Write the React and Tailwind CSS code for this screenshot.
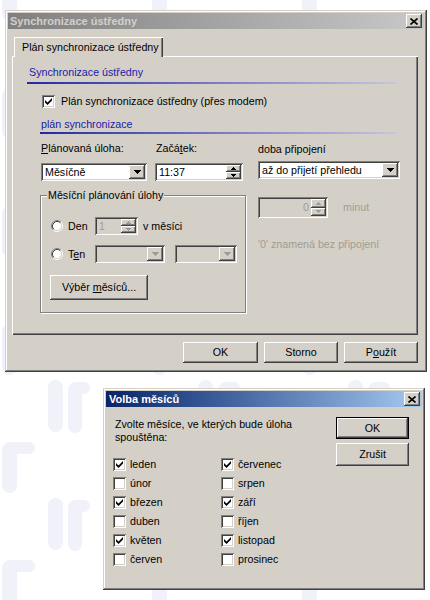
import React from 'react';

const RAISED = 'shadow-[inset_-1px_-1px_0_#404040,inset_1px_1px_0_#ffffff,inset_-2px_-2px_0_#808080,inset_2px_2px_0_#d4d0c8]';
const SUNKEN = 'shadow-[inset_1px_1px_0_#808080,inset_-1px_-1px_0_#ffffff,inset_2px_2px_0_#404040,inset_-2px_-2px_0_#d4d0c8]';
const FRAME = 'shadow-[inset_-1px_-1px_0_#404040,inset_1px_1px_0_#d4d0c8,inset_-2px_-2px_0_#808080,inset_2px_2px_0_#ffffff]';

const Tri = ({ up, w = 7, h = 4, color = '#000' }) => (
  <svg width={w} height={h} viewBox={`0 0 ${w} ${h}`} shapeRendering="crispEdges">
    <path d={up ? `M0 ${h}H${w}L${w / 2} 0Z` : `M0 0H${w}L${w / 2} ${h}Z`} fill={color} />
  </svg>
);

const CloseBtn = () => (
  <div className={`w-[16px] h-[14px] bg-[#d4d0c8] ${RAISED} flex items-center justify-center`}>
    <svg width="8" height="7" viewBox="0 0 8 7">
      <path d="M0.5 0.5L7.5 6.5M7.5 0.5L0.5 6.5" stroke="#000" strokeWidth="1.6" />
    </svg>
  </div>
);

const Check = ({ checked }) => (
  <div className={`w-[13px] h-[13px] bg-white ${SUNKEN} flex items-center justify-center shrink-0`}>
    {checked && (
      <svg width="7" height="7" viewBox="0 0 7 7">
        <path d="M0 2L2.5 4.5L7 0V2.5L2.5 7L0 4.5Z" fill="#000" />
      </svg>
    )}
  </div>
);

const Radio = () => (
  <svg width="12" height="12" viewBox="0 0 12 12" className="shrink-0">
    <circle cx="6" cy="6" r="4.5" fill="#fff" />
    <path d="M2.11 9.89A5.5 5.5 0 0 1 9.89 2.11" stroke="#808080" fill="none" />
    <path d="M2.82 9.18A4.5 4.5 0 0 1 9.18 2.82" stroke="#404040" fill="none" />
    <path d="M9.89 2.11A5.5 5.5 0 0 1 2.11 9.89" stroke="#ffffff" fill="none" />
    <path d="M9.18 2.82A4.5 4.5 0 0 1 2.82 9.18" stroke="#d4d0c8" fill="none" />
  </svg>
);

const Combo = ({ className, value, disabled }) => (
  <div className={`${className} ${SUNKEN} ${disabled ? 'bg-[#d4d0c8]' : 'bg-white'} flex items-stretch p-[2px]`}>
    <span className="flex-1 pl-[2px] flex items-center whitespace-nowrap overflow-hidden">{value}</span>
    <div className={`w-[16px] bg-[#d4d0c8] ${RAISED} flex items-center justify-center`}>
      <Tri color={disabled ? '#a09c94' : '#000'} />
    </div>
  </div>
);

const Spin = ({ className, value, disabled, right }) => (
  <div className={`${className} ${SUNKEN} ${disabled ? 'bg-[#d4d0c8]' : 'bg-white'} flex items-stretch p-[2px]`}>
    <span
      className={`flex-1 flex items-center px-[2px] ${right ? 'justify-end' : ''} ${disabled ? 'text-[#a09c94]' : ''}`}
    >
      {value}
    </span>
    <div className="w-[15px] flex flex-col">
      <div className={`flex-1 bg-[#d4d0c8] ${RAISED} flex items-center justify-center`}>
        <Tri up w={5} h={3} color={disabled ? '#a09c94' : '#000'} />
      </div>
      <div className={`flex-1 bg-[#d4d0c8] ${RAISED} flex items-center justify-center`}>
        <Tri w={5} h={3} color={disabled ? '#a09c94' : '#000'} />
      </div>
    </div>
  </div>
);

const Button = ({ className, children }) => (
  <div className={`${className} bg-[#d4d0c8] ${RAISED} flex items-center justify-center`}>{children}</div>
);

const months = [
  ['leden', true, 'červenec', true],
  ['únor', false, 'srpen', false],
  ['březen', true, 'září', true],
  ['duben', false, 'říjen', false],
  ['květen', true, 'listopad', true],
  ['červen', false, 'prosinec', false],
];

// faint "ir" watermark behind the windows
const Watermark = () => (
  <svg className="absolute inset-0" width="430" height="600">
    <defs>
      <pattern id="wm" width="150" height="118" patternUnits="userSpaceOnUse">
        <g fill="#f0f1f9">
          <rect x="48" y="26" width="15" height="52" rx="7.5" />
          <path d="M68 36a8 8 0 0 1 8-8h8a6 6 0 0 1 0 12h-2v32a7 7 0 0 1-14 0Z" />
          <path d="M2 96a8 8 0 0 1 8-8h19a6 6 0 0 1 0 12h-12v31.5a7.5 7.5 0 0 1-15 0Z" />
          <path d="M2 -22a8 8 0 0 1 8-8h19a6 6 0 0 1 0 12h-12v31.5a7.5 7.5 0 0 1-15 0Z" />
        </g>
      </pattern>
    </defs>
    <rect width="430" height="600" fill="url(#wm)" />
  </svg>
);

export default function App() {
  return (
    <div className="relative w-[430px] h-[600px] bg-white overflow-hidden font-['Liberation_Sans',Arial,sans-serif] text-[10.7px] leading-[13px] text-black">
      <Watermark />

      <div className="relative pt-[10px] pl-[5px]">
        {/* Main window */}
        <div className={`w-[422px] h-[362px] bg-[#d4d0c8] ${FRAME} p-[3px] flex flex-col`}>
          <div className="h-[16px] shrink-0 bg-linear-to-r from-[#808080] to-[#c8c8c8] flex items-center justify-between pl-[2px] pr-[2px]">
            <span className="font-bold text-[11px] text-[#d4d0c8]">Synchronizace ústředny</span>
            <CloseBtn />
          </div>

          <div className="mt-[8px] ml-[6px] flex">
            <div className="relative z-10 -mb-[1px] h-[20px] w-[149px] bg-[#d4d0c8] shadow-[inset_1px_1px_0_#ffffff,inset_-1px_0_0_#404040,inset_-2px_0_0_#808080] flex items-center pl-[8px]">
              Plán synchronizace ústředny
            </div>
          </div>

          <div className="ml-[4px] w-[406px] h-[279px] shrink-0 bg-[#d4d0c8] shadow-[inset_1px_1px_0_#ffffff,inset_-1px_-1px_0_#404040,inset_-2px_-2px_0_#808080] pt-[10px]">
            <div className="ml-[17px] text-[#2020a8]">Synchronizace ústředny</div>
            <div className="mt-[3px] ml-[15px] w-[370px] h-[2px] bg-linear-to-r from-[#2626a0] via-[#7a78c4] to-[#c8c6dc]" />

            <div className="mt-[11px] ml-[30px] flex items-center h-[13px]">
              <Check checked />
              <span className="ml-[6px]">Plán synchronizace ústředny (přes modem)</span>
            </div>

            <div className="mt-[10px] ml-[29px] text-[#2020a8]">plán synchronizace</div>
            <div className="mt-[1px] ml-[28px] w-[357px] h-[2px] bg-linear-to-r from-[#2626a0] via-[#7a78c4] to-[#c8c6dc]" />

            <div className="mt-[8px] ml-[28px] flex">
              {/* left column */}
              <div className="w-[206px]">
                <div className="flex h-[13px]">
                  <span className="w-[116px] pl-[1px]">
                    <u>P</u>lánovaná úloha:
                  </span>
                  <span>
                    Začá<u>t</u>ek:
                  </span>
                </div>
                <div className="mt-[8px] flex">
                  <Combo className="ml-[1px] w-[106px] h-[18px]" value="Měsíčně" />
                  <Spin className="ml-[8px] w-[88px] h-[18px]" value="11:37" />
                </div>

                <div className="relative mt-[14px] w-[206px] h-[118px] border border-[#808080] shadow-[inset_1px_1px_0_#ffffff,1px_1px_0_#ffffff]">
                  <span className="absolute left-[6px] -top-[7px] px-[1px] bg-[#d4d0c8]">Měsíční plánování úlohy</span>

                  <div className="mt-[21px] flex items-center h-[18px]">
                    <div className="w-[54px] flex items-center pl-[10px]">
                      <Radio />
                      <span className="ml-[5px]">Den</span>
                    </div>
                    <Spin className="w-[43px] h-[18px]" value="1" disabled />
                    <span className="ml-[5px]">v měsíci</span>
                  </div>

                  <div className="mt-[10px] flex items-center h-[18px]">
                    <div className="w-[54px] flex items-center pl-[10px]">
                      <Radio />
                      <span className="ml-[5px]">
                        T<u>e</u>n
                      </span>
                    </div>
                    <Combo className="w-[70px] h-[18px]" value="" disabled />
                    <Combo className="ml-[10px] w-[62px] h-[18px]" value="" disabled />
                  </div>

                  <Button className="mt-[12px] ml-[9px] w-[98px] h-[25px]">
                    <span>
                      Výběr <u>m</u>ěsíců...
                    </span>
                  </Button>
                </div>
              </div>

              {/* right column */}
              <div className="ml-[12px] w-[143px]">
                <div className="mt-[1px]">doba připojení</div>
                <Combo className="mt-[5px] w-[142px] h-[18px]" value="až do přijetí přehledu" />
                <div className="mt-[18px] flex items-center">
                  <Spin className="w-[70px] h-[21px]" value="0" disabled right />
                  <span className="ml-[15px] text-[#a09c94]">minut</span>
                </div>
                <div className="mt-[20px] text-[#a09c94] whitespace-nowrap">'0' znamená bez připojení</div>
              </div>
            </div>
          </div>

          <div className="mt-[7px] ml-[4px] w-[406px] flex justify-end gap-[6px]">
            <Button className="w-[75px] h-[21px]">OK</Button>
            <Button className="w-[74px] h-[21px]">Storno</Button>
            <Button className="w-[74px] h-[21px]">
              <span>
                P<u>o</u>užít
              </span>
            </Button>
          </div>
        </div>

        {/* Volba měsíců dialog */}
        <div className={`ml-[98px] mt-[16px] w-[322px] h-[202px] bg-[#d4d0c8] ${FRAME} p-[3px] flex flex-col`}>
          <div className="h-[16px] shrink-0 bg-linear-to-r from-[#0a246a] to-[#a6caf0] flex items-center justify-between pl-[3px] pr-[2px]">
            <span className="font-bold text-[11px] text-white">Volba měsíců</span>
            <CloseBtn />
          </div>

          <div className="flex">
            <div className="flex-1 pl-[7px]">
              <div className="mt-[11px] ml-[2px]">
                Zvolte měsíce, ve kterých bude úloha
                <br />
                spouštěna:
              </div>
              <div className="mt-[14px] grid grid-cols-[108px_auto] gap-y-[6px]">
                {months.map(([a, ac, b, bc]) => (
                  <React.Fragment key={a}>
                    <div className="flex items-center h-[13px]">
                      <Check checked={ac} />
                      <span className="ml-[4px]">{a}</span>
                    </div>
                    <div className="flex items-center h-[13px]">
                      <Check checked={bc} />
                      <span className="ml-[4px]">{b}</span>
                    </div>
                  </React.Fragment>
                ))}
              </div>
            </div>
            <div className="mt-[10px] mr-[13px] flex flex-col">
              <div className="w-[73px] h-[22px] border border-black flex">
                <Button className="flex-1">OK</Button>
              </div>
              <Button className="mt-[4px] w-[73px] h-[23px]">Zrušit</Button>
            </div>
          </div>
        </div>
      </div>
    </div>
  );
}
